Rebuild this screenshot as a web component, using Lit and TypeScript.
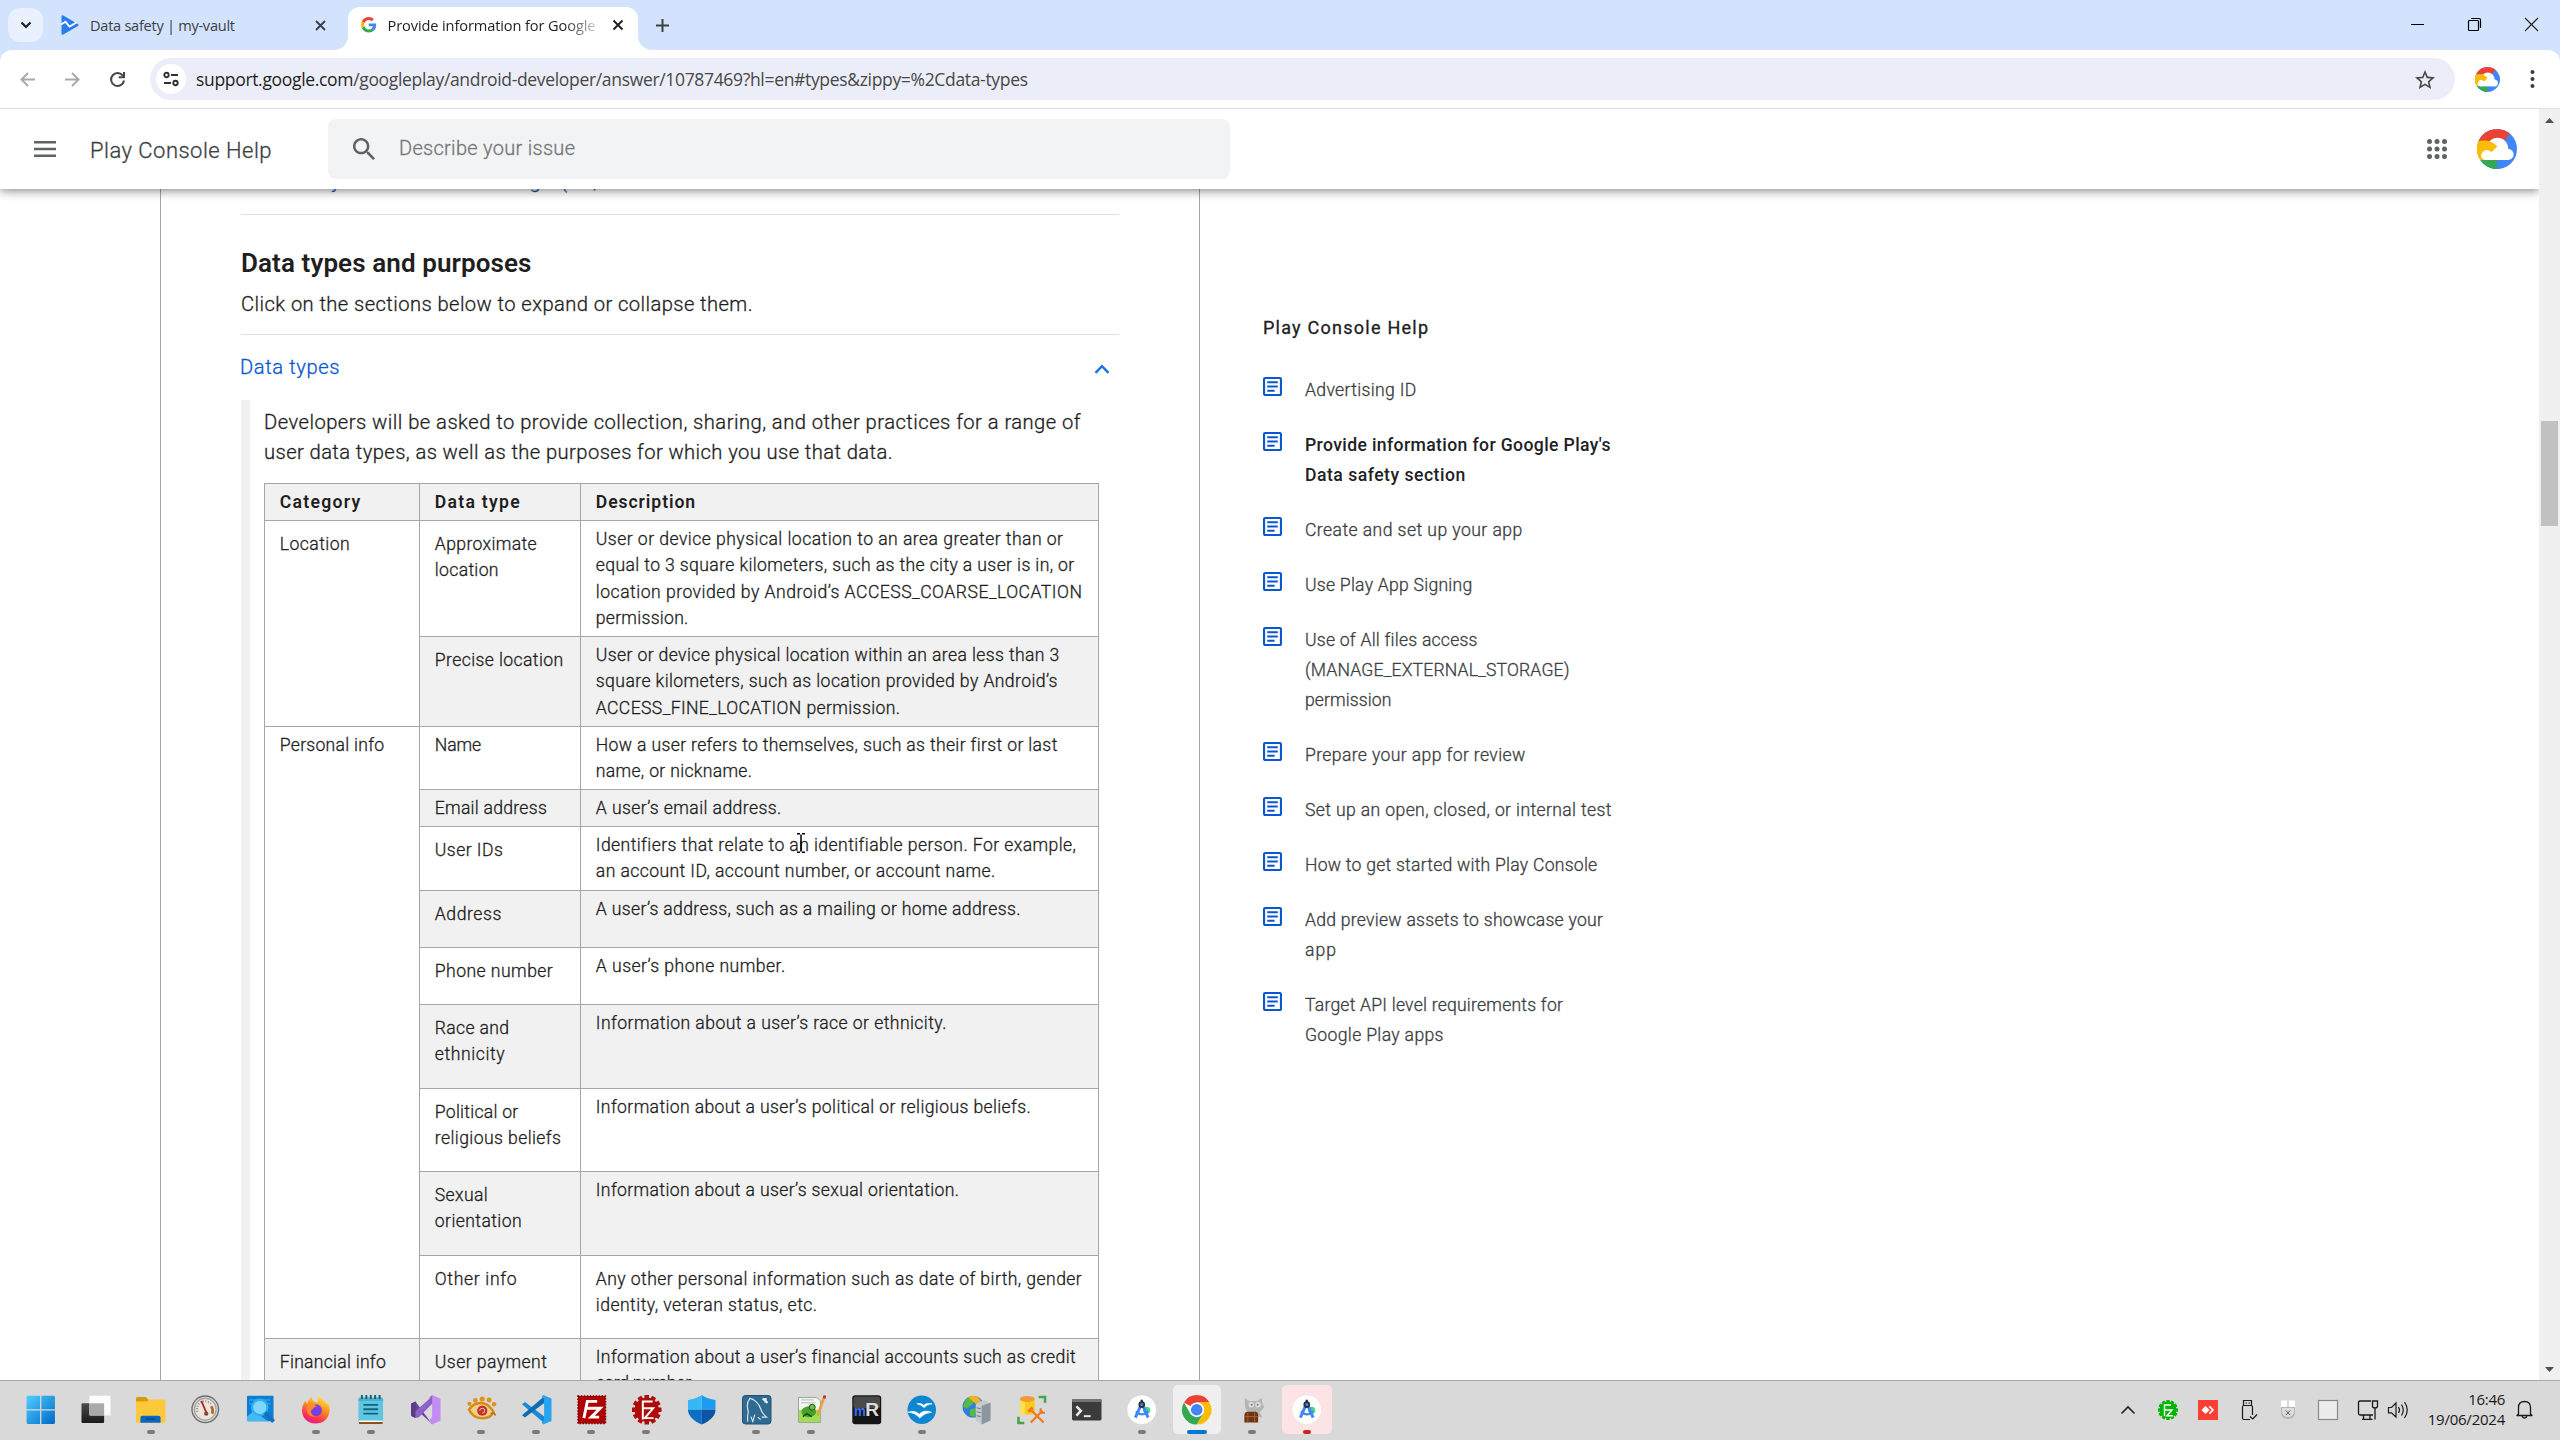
import { LitElement, html, css, svg, nothing } from "lit";
import { customElement, property } from "lit/decorators.js";

/* A single line of text whose tracking is adjusted to a given width. */
@customElement("fit-text")
class FitText extends LitElement {
  static styles = css`
    :host { display: inline-block; white-space: nowrap; }
  `;
  @property({ type: Number }) w = 0;
  firstUpdated() {
    const n = (this.textContent ?? "").trim().length;
    if (!this.w || n < 2) return;
    const natural = this.getBoundingClientRect().width;
    this.style.letterSpacing = `${((this.w - natural) / (n - 1)).toFixed(3)}px`;
  }
  render() { return html`<slot></slot>`; }
}

type Line = [string, number];
const lines = (ls: Line[]) => ls.map(([t, w]) => html`<div class="ln"><fit-text .w=${w + 1.2}>${t}</fit-text></div>`);

interface Row {
  cat?: { text: Line; span: number; grey?: boolean; low?: boolean };
  type: Line[]; desc: Line[]; grey?: boolean; typeLow?: boolean; descLow?: boolean;
}

const ROWS: Row[] = [
  { cat: { text: ["Location", 68.6], span: 2, low: true }, typeLow: true,
    type: [["Approximate", 100.7], ["location", 62.5]],
    desc: [["User or device physical location to an area greater than or", 466], ["equal to 3 square kilometers, such as the city a user is in, or", 477.3], ["location provided by Android’s ACCESS_COARSE_LOCATION", 484.9], ["permission.", 91.3]] },
  { grey: true, typeLow: true, type: [["Precise location", 127.2]],
    desc: [["User or device physical location within an area less than 3", 462.2], ["square kilometers, such as location provided by Android’s", 460.5], ["ACCESS_FINE_LOCATION permission.", 303]] },
  { cat: { text: ["Personal info", 103.1], span: 9 }, type: [["Name", 45]],
    desc: [["How a user refers to themselves, such as their first or last", 460], ["name, or nickname.", 155]] },
  { grey: true, type: [["Email address", 110.8]], desc: [["A user’s email address.", 184.3]] },
  { typeLow: true, type: [["User IDs", 66.9]],
    desc: [["Identifiers that relate to an identifiable person. For example,", 478.3], ["an account ID, account number, or account name.", 398.2]] },
  { grey: true, typeLow: true, type: [["Address", 65.3]], desc: [["A user’s address, such as a mailing or home address.", 423.4]] },
  { typeLow: true, type: [["Phone number", 116.8]], desc: [["A user’s phone number.", 188.1]] },
  { grey: true, typeLow: true, type: [["Race and", 73], ["ethnicity", 68.6]], desc: [["Information about a user’s race or ethnicity.", 349.4]] },
  { typeLow: true, type: [["Political or", 82.3], ["religious beliefs", 125]], desc: [["Information about a user’s political or religious beliefs.", 433.8]] },
  { grey: true, typeLow: true, type: [["Sexual", 51.6], ["orientation", 85.6]], desc: [["Information about a user’s sexual orientation.", 362]] },
  { typeLow: true, descLow: true, type: [["Other info", 80.6]],
    desc: [["Any other personal information such as date of birth, gender", 484.8], ["identity, veteran status, etc.", 220]] },
  { cat: { text: ["Financial info", 104.8], span: 1, grey: true, low: true }, grey: true, typeLow: true,
    type: [["User payment", 110.8]],
    desc: [["Information about a user’s financial accounts such as credit", 478.3], ["card number.", 97]] },
];

const NAV: { lines: Line[]; current?: boolean }[] = [
  { lines: [["Advertising ID", 110]] },
  { lines: [["Provide information for Google Play's", 304.3], ["Data safety section", 159]], current: true },
  { lines: [["Create and set up your app", 216]] },
  { lines: [["Use Play App Signing", 166]] },
  { lines: [["Use of All files access", 171], ["(MANAGE_EXTERNAL_STORAGE)", 263.3], ["permission", 85.3]] },
  { lines: [["Prepare your app for review", 219]] },
  { lines: [["Set up an open, closed, or internal test", 305.3]] },
  { lines: [["How to get started with Play Console", 291]] },
  { lines: [["Add preview assets to showcase your", 296.7], ["app", 29.7]] },
  { lines: [["Target API level requirements for", 256.7], ["Google Play apps", 137.3]] },
];

const cloudAvatar = (size: number, id: string) => html`
  <svg width=${size} height=${size} viewBox="0 0 40 40">
    <defs><clipPath id=${id}><circle cx="20" cy="20" r="20"/></clipPath></defs>
    <g clip-path="url(#${id})">
      <rect width="40" height="40" fill="#4285f4"/>
      <path d="M0 0H36L27 12H0z" fill="#ea4335"/>
      <rect y="12" width="14" height="19" fill="#fbbc04"/>
      <rect y="31" width="20" height="9" fill="#34a853"/>
      <circle cx="20.5" cy="19.5" r="10.7" fill="#fff"/>
      <circle cx="9" cy="25.7" r="5.3" fill="#fff"/>
      <circle cx="31" cy="25.4" r="5.6" fill="#fff"/>
      <rect x="9" y="20" width="22" height="11" fill="#fff"/>
      <path d="M0 12.5C7 10.5 15 11.5 20.3 17.5L14.5 23C11 19.3 4.5 20.5 4 27.5L0 29z" fill="#fbbc04"/>
    </g>
  </svg>`;

const gLogo = svg`
  <path fill="#EA4335" d="M24 9.5c3.54 0 6.71 1.22 9.21 3.6l6.85-6.85C35.9 2.38 30.47 0 24 0 14.62 0 6.51 5.38 2.56 13.22l7.98 6.19C12.43 13.72 17.74 9.5 24 9.5z"/>
  <path fill="#4285F4" d="M46.98 24.55c0-1.57-.15-3.09-.38-4.55H24v9.02h12.94c-.58 2.96-2.26 5.48-4.78 7.18l7.73 6c4.51-4.18 7.09-10.36 7.09-17.65z"/>
  <path fill="#FBBC05" d="M10.53 28.59c-.48-1.45-.76-2.99-.76-4.59s.27-3.14.76-4.59l-7.98-6.19C.92 16.46 0 20.12 0 24c0 3.88.92 7.54 2.56 10.78l7.97-6.19z"/>
  <path fill="#34A853" d="M24 48c6.48 0 11.93-2.13 15.89-5.81l-7.73-6c-2.15 1.45-4.92 2.3-8.16 2.3-6.26 0-11.57-4.22-13.47-9.91l-7.98 6.19C6.51 42.62 14.62 48 24 48z"/>`;

/* Teeth around a round or square badge */
const gear = (cx: number, cy: number, r: number, n: number, t: number) =>
  Array.from({ length: n }, (_, i) => svg`<rect x=${cx - t / 2} y=${cy - r} width=${t} height=${r * 2} transform=${`rotate(${(180 / n) * i} ${cx} ${cy})`}/>`);

const compass = svg`
  <circle cx="20" cy="15.500" r="3.600" fill="#3ddc84"/>
  <path d="M14 10.500L8.500 23M16 10.500L21.500 23" stroke="#4285f4" stroke-width="3" fill="none"/>
  <path d="M9 16.800C13 20.600 17.500 20.400 21.500 16.500" stroke="#4285f4" stroke-width="2.300" fill="none"/>
  <path d="M15 4.800V8" stroke="#263238" stroke-width="2.400"/>
  <circle cx="15" cy="9.700" r="2.500" fill="#4285f4" stroke="#263238" stroke-width="1.800"/>`;

interface Task { icon: unknown; run?: "grey" | "blue" | "red"; hi?: "light" | "pink"; }

const TASKS: Task[] = [
  { icon: svg`<defs><linearGradient id="wn" x1="0" y1="0" x2="1" y2="1"><stop offset="0" stop-color="#4fd0ff"/><stop offset="1" stop-color="#0067c8"/></linearGradient></defs>
    <path fill="url(#wn)" d="M2 .8H14.3V14.5H.6V2.2Q.6.8 2 .8zM15.6.8H28Q29.4.8 29.4 2.2V14.5H15.6zM.6 15.8H14.3V29.6H2Q.6 29.6.6 28.2zM15.6 15.8H29.4V28.2Q29.4 29.6 28 29.6H15.6z"/>` },
  { icon: svg`<defs><linearGradient id="tv" x1="0" y1="0" x2="0" y2="1"><stop offset="0" stop-color="#4a4a4a"/><stop offset="1" stop-color="#1a1a1a"/></linearGradient></defs>
    <rect x=".5" y="8.5" width="23" height="20" rx="1" fill="url(#tv)"/><rect x="8.5" y=".8" width="21.5" height="20" rx="1" fill="#fff" opacity=".92"/><rect x="8.5" y="8.5" width="15" height="12.3" fill="#aaa"/>` },
  { run: "grey", icon: svg`<path d="M0 3.5Q0 2 1.5 2H10L13 5H20V12H0z" fill="#dc9a0a"/><path d="M0 6.5H11L14 4.7H28.5Q30 4.7 30 6.2V27Q30 28.3 28.5 28.3H1.5Q0 28.3 0 27z" fill="#fdc93b"/><path d="M4.5 28.3V23Q4.5 21 6.5 21H23Q25 21 25 23V28.3z" fill="#0b66bd"/><path d="M10 24.4H19.5" stroke="#063f80" stroke-width="1.2"/>` },
  { icon: svg`<circle cx="14.5" cy="14.5" r="13.5" fill="#d6d6d3" stroke="#6b7073" stroke-width="1.4"/><circle cx="14.5" cy="14.5" r="11" fill="#ebe5da" stroke="#a5a29c" stroke-width="1.2"/><path d="M6.500 17A8 8 0 0 1 20 9" stroke="#8d8d86" stroke-width="2" stroke-dasharray="1 1.6" fill="none"/><path d="M20.5 11.500A8 8 0 0 1 21.500 19" stroke="#a8692e" stroke-width="2.600" fill="none"/><path d="M10.500 6L16.500 20" stroke="#b3202a" stroke-width="1.800"/><circle cx="15.500" cy="19" r="2.200" fill="#7c4b43"/>` },
  { icon: svg`<rect x="1" y=".8" width="27" height="26" rx="1" fill="#0c7fd4"/><path d="M3 5H25M3 9H25" stroke="#3fb0ef" stroke-width="2" opacity=".5"/><path d="M1 26.800V22L8 16 22 26.800z" fill="#4cc0f6" opacity=".9"/><circle cx="14" cy="12.5" r="7.800" fill="#7fd8fb" stroke="#2bb0f2" stroke-width="2.2"/><path d="M19.5 18L28 27" stroke="#1270bd" stroke-width="4"/>` },
  { run: "grey", icon: svg`<defs><linearGradient id="ff" x1=".75" y1="0" x2=".3" y2="1"><stop offset="0" stop-color="#fff14f"/><stop offset=".4" stop-color="#ff9a1e"/><stop offset=".75" stop-color="#ff3b4b"/><stop offset="1" stop-color="#e5148b"/></linearGradient></defs>
    <path d="M15 29C6.500 29 1 23 1 15.500 1 11 3 8 5 5.500 5.200 7 5.500 8 6.500 9 7 6 8.500 3.500 11 2 10.800 5 13 6.500 16 7.500 18 5 17 2.500 19 0 20 4 24 6 26.500 9 27.500 9.500 27.300 8 27.300 7.500 29 10.500 29.500 13.500 29 17 28 24 22.500 29 15 29z" fill="url(#ff)"/><circle cx="15.200" cy="15.500" r="6" fill="#7a3fe0"/><path d="M6 12C9 8.500 14 9 16 11.500 13 12 13 14.500 10.500 15 9.500 18 11 21 15 22 8.500 23 5 18 6 12z" fill="#ff8a2a"/>` },
  { run: "grey", icon: svg`<rect x="2.500" y="3" width="25" height="25.500" rx="1.500" fill="#5fc6e2"/><path d="M2.500 4.500Q2.500 2.500 4.500 2.500H25.500Q27.500 2.500 27.500 4.500V6H2.500z" fill="#45b4d2"/><path d="M6 0V4M10.500 0V4M15 0V4M19.500 0V4M24 0V4" stroke="#155f78" stroke-width="2"/><path d="M7.500 10H22.500M7.500 14.500H22.500M7.500 19H22.500" stroke="#0f6580" stroke-width="1.900"/><rect x="3" y="26" width="24" height="1.500" fill="#fff"/><rect x="3" y="27.500" width="24" height="2" fill="#954c14"/>` },
  { icon: svg`<path d="M0 9L4.500 6.500 21 29 8 17 4 23 0 21z" fill="#6a4299"/><path d="M0 21L4.500 23.500 22 1 9 12.500z" fill="#8d62c4"/><path d="M0 9L4.500 6.500V23.500L0 21z" fill="#5b3b86"/><path d="M21.500 0L30 3.800V26.200L21.500 30 18 27 21.500 22V8L18 3z" fill="#c48cf2"/><path d="M4 23.500L17 7 21.500 0V9L8 22.500z" fill="#8b5ecb"/>` },
  { run: "grey", icon: svg`<path d="M2 15C6 9 12 7.500 17 8.500 22 9.500 24 13 27 17 25 22 20 24 14 23.500 8 23 4 19 2 15z" fill="#ecd08e" stroke="#d98a12" stroke-width="2.500"/><circle cx="15.500" cy="16" r="5.200" fill="#c6322a"/><path d="M13 16a2.500 2.500 0 1 1 2.500 2.500" stroke="#f3c9b0" stroke-width="1" fill="none"/><circle cx="2.500" cy="9" r="2.100" fill="#e09417"/><circle cx="8.500" cy="5.500" r="2.400" fill="#e09417"/><circle cx="15.500" cy="4" r="2.600" fill="#e09417"/><circle cx="22.500" cy="5" r="2.500" fill="#e09417"/><circle cx="27.500" cy="9.500" r="2.300" fill="#e09417"/><path d="M24 19Q28 17 29 21" stroke="#b06b2d" stroke-width="1.500" fill="none"/>` },
  { run: "grey", icon: svg`<path d="M0 9.500L3 7 23 22V29z" fill="#1a8ad4"/><path d="M0 20.500L3 23 23 8V1z" fill="#0c6db5"/><path d="M21.500 0L30 3.500V26.500L21.500 30 20 28 22.500 26V4L20 2z" fill="#27a3f0"/>` },
  { run: "grey", icon: svg`<rect x="1" y="1" width="28" height="28" fill="#b10000" stroke="#7a0000" stroke-width="1.600" stroke-dasharray="1.500 1.500"/><path d="M7 23.500L10.500 6.500H20.500M9 13.500H17M14.500 13.500H23.500L14.500 22.500H22.500" stroke="#fff" stroke-width="3" fill="none"/>` },
  { run: "grey", icon: svg`<g fill="#b00b0b">${gear(15, 15, 15, 6, 4.600)}<circle cx="15" cy="15" r="12.400"/></g><path d="M11 25V6.500H21M11 13.500H21.500L13 23.500H22" stroke="#fff" stroke-width="2" fill="none"/>` },
  { icon: svg`<path d="M15 0C18.500 2.500 24 4.500 29 5V15H15z" fill="#1d9bee"/><path d="M15 0C11.500 2.500 6 4.500 1 5V15H15z" fill="#35b8f5"/><path d="M1 15H15V30C7 26.500 1 21.500 1 15z" fill="#0d6fc4"/><path d="M29 15H15V30C23 26.500 29 21.500 29 15z" fill="#0b55a4"/>` },
  { run: "grey", icon: svg`<rect x=".5" y=".5" width="29" height="29" rx="3" fill="#2f6a91" stroke="#244f6e"/><path d="M6 27C5 22 6 20 6.500 17 4.500 11 6 6 8 3.500 12 4 17 8 19 14 20 18 22 20 25 22.500L20 22.500M19 25L16 22.500M9 22L11 27 13 20" stroke="#d6e6ef" stroke-width="1.200" fill="none"/><path d="M21 3.500L26 8M24 3V8" stroke="#e8eff3" stroke-width="2.200"/>` },
  { run: "grey", icon: svg`<path d="M1.500 2.500H20L24 6V28H1.500z" fill="#f3f5f0" stroke="#9aa19a"/><path d="M2 15H23.500V27.500H2z" fill="#9fdd55"/><path d="M4 5H17M4 8H19" stroke="#b7bdb7"/><ellipse cx="12" cy="17" rx="7.500" ry="5.500" fill="#49a32b"/><circle cx="15.500" cy="12.500" r="3" fill="#6cc63b" stroke="#234d17"/><path d="M6 22L10 19 15 22" stroke="#1d4513" stroke-width="1.500" fill="none"/><path d="M28 1L21 21" stroke="#e8a23b" stroke-width="2.600"/><path d="M28.500 .5L27.500 3.500" stroke="#c13b2d" stroke-width="2.800"/>` },
  { icon: svg`<rect x=".3" y=".3" width="29.400" height="29.400" rx="3" fill="#151515"/><rect x="1.500" y="1.500" width="27" height="12" rx="2" fill="#4a4a4a"/><text x="2" y="21" font-family="Liberation Sans" font-weight="700" font-size="14" fill="#3c6ff0" textLength="12" lengthAdjust="spacingAndGlyphs">m</text><text x="13.500" y="21" font-family="Liberation Sans" font-weight="700" font-size="19" fill="#dcdcdc" textLength="14" lengthAdjust="spacingAndGlyphs">R</text>` },
  { run: "grey", icon: svg`<circle cx="15" cy="15" r="14.500" fill="#0f86d1"/><path d="M10 9Q14 7.500 17 10.500 20 7.500 25.500 9 20 9.500 17.500 13 14 9.500 10 9z" fill="#fff" stroke="#fff" stroke-width=".6"/><path d="M1 17.500Q8 15 12.500 19.500 17 14.500 25 17.500 18 18 13 23.500 8.500 18 1 17.500z" fill="#fff" stroke="#fff" stroke-width=".6"/>` },
  { icon: svg`<circle cx="11.500" cy="12" r="11" fill="#2f7fd6"/><path d="M3 6Q8 0 14 2L11 9 5 14 1 12zM8 15L15 13 13 22 8 21z" fill="#57b947"/><path d="M6 2Q15-2 20 7L14 9z" fill="#f2b321"/><path d="M14 9L23 5 29 8V26L20 30 14 26z" fill="#c4ccd2"/><path d="M20 11L29 8V26L20 30z" fill="#8b969e"/><path d="M15 13L19 14M15 17L19 18M15 21L19 22" stroke="#6b757c"/>` },
  { icon: svg`<path d="M3 4V18C3 20.500 18 20.500 18 18V4z" fill="#fbcb1c"/><path d="M3 4V18C3 19 5.500 20 8 20V5z" fill="#ffdf57"/><ellipse cx="10.500" cy="4" rx="7.500" ry="3" fill="#f19a38"/><path d="M22 2H28.500V8M1.500 22V28.500H7.500" stroke="#48a44b" stroke-width="2.600" fill="none"/><path d="M14 15L27 28M26 16L14 28" stroke="#ef7a1a" stroke-width="2.200"/><path d="M11.500 17L16 13" stroke="#ef7a1a" stroke-width="3.200"/><path d="M24 13.500V18H28.500" stroke="#ef7a1a" stroke-width="2" fill="none"/>` },
  { icon: svg`<rect x="0" y="4" width="30" height="22" rx="1.500" fill="#3b3b3b"/><rect x="0" y="4" width="30" height="3" rx="1" fill="#757575"/><path d="M4.500 11.500L9 16 4.500 21" stroke="#e8e8e8" stroke-width="2.600" fill="none"/><path d="M12 21.500H19" stroke="#e8e8e8" stroke-width="2"/>` },
  { run: "grey", icon: svg`<g fill="#fff">${gear(15, 15, 14.600, 8, 5)}<circle cx="15" cy="15" r="13.800"/></g>${compass}` },
  { run: "blue", hi: "light", icon: svg`<circle cx="15" cy="15" r="15" fill="#fff"/><path d="M15 15L2 7.500A15 15 0 0 1 28 7.500H15z" fill="#ea4335"/><path d="M28 7.500A15 15 0 0 1 15 30L21.500 18.700 21.500 11.300 15 7.500z" fill="#fbbc05"/><path d="M2 7.500L8.500 18.700 15 22.500 21.500 18.700 15 30A15 15 0 0 1 2 7.500z" fill="#34a853"/><circle cx="15" cy="15" r="7.500" fill="#fff"/><circle cx="15" cy="15" r="5.900" fill="#4285f4"/>` },
  { run: "grey", icon: svg`<path d="M8 3L12 6H21L25 3 26 10 28 12 23 18 26 23 19 22 12 20 8 12z" fill="#b4b4b2"/><circle cx="14.500" cy="10" r="2.800" fill="#dedede"/><circle cx="21.500" cy="10" r="2.800" fill="#dedede"/><circle cx="15" cy="10" r="1" fill="#777"/><circle cx="21" cy="10" r="1" fill="#777"/><path d="M7.500 20Q8 17 11 17H19Q21 17 21.500 20V28H7.500z" fill="#6f3413"/><path d="M7.500 22H21.500M11 18V28M18 18V28" stroke="#a8652a" stroke-width="1"/>` },
  { run: "red", hi: "pink", icon: svg`<circle cx="15" cy="15" r="14.500" fill="#fff"/>${compass}` },
];

@customElement("app-root")
class AppRoot extends LitElement {
  static styles = css`
    :host { display: block; width: 2560px; height: 1440px; overflow: hidden; background: #fff; color: #1f1f1f; font-family: Roboto, "Liberation Sans", sans-serif; }
    * { box-sizing: border-box; }
    svg { display: block; flex: none; overflow: visible; }
    .screen { display: flex; flex-direction: column; width: 2560px; height: 1440px; overflow: hidden; position: relative; }
    .seg { font-family: "Open Sans", "Noto Sans", sans-serif; }

    .tabs { display: flex; height: 50px; background: #d3e3fd; flex: none; padding-left: 8px; }
    .tabmenu { width: 35px; height: 34px; margin-top: 8px; border-radius: 12px; background: #e9f1fe; display: grid; place-items: center; }
    .tab { display: flex; height: 50px; align-items: center; font-size: 14.6px; color: #3c4043; }
    .tab1 { margin-left: 18px; width: 287px; }
    .title1 { margin-left: 11px; width: 225px; }
    .tab2 { width: 290px; height: 43px; margin-top: 7px; padding-left: 13px; padding-bottom: 7px; background: #fff; border-radius: 12px 12px 0 0; position: relative; color: #1f1f1f; }
    .tab2::before, .tab2::after { content: ""; position: absolute; bottom: 0; width: 14px; height: 14px; }
    .tab2::before { left: -14px; background: radial-gradient(circle at 0 0, #d3e3fd 13.500px, #fff 14.500px); }
    .tab2::after { right: -14px; background: radial-gradient(circle at 100% 0, #d3e3fd 13.500px, #fff 14.500px); }
    .title2 { width: 209px; margin: 0 16px 0 11px; overflow: hidden; -webkit-mask-image: linear-gradient(90deg, #000 175px, transparent 218px); }
    .plus { margin: 19px 0 0 18px; }
    .win { margin-left: auto; display: flex; gap: 44px; padding: 18px 22px 0 0; }

    .toolbarwrap { background: #d3e3fd; flex: none; }
    .toolbar { height: 59px; background: #fff; border-radius: 12px 12px 0 0; border-bottom: 1px solid #dfdfdf; display: flex; align-items: center; padding: 0 0 0 20px; }
    .nav { display: flex; gap: 30px; width: 130px; }
    .omni { width: 2305px; height: 42px; border-radius: 21px; background: #ebeef8; display: flex; align-items: center; padding: 0 20px 0 6px; font-size: 17.500px; color: #474747; }
    .site { width: 30px; height: 30px; border-radius: 50%; background: #fff; display: grid; place-items: center; margin-right: 10px; }
    .dom { color: #1f1f1f; }
    .omni .star { margin-left: auto; }
    .tbav { margin-left: 20px; }
    .kebab { margin-left: 30px; }

    .page { flex: 1; display: flex; min-height: 0; }
    .view { width: 2539px; display: flex; flex-direction: column; overflow: hidden; }
    .head { height: 80px; flex: none; background: #fff; display: flex; align-items: center; padding-left: 34px; position: relative; z-index: 1; box-shadow: 0 1px 10px rgba(0,0,0,.55); clip-path: inset(0 0 -12px 0); font-weight: 300; -webkit-text-stroke: .3px currentColor; }
    .brand { font-size: 22px; color: #3c4043; margin: 3px 0 0 34px; width: 238px; line-height: 30px; }
    .search { width: 902px; height: 60px; border-radius: 8px; background: #f1f3f4; display: flex; align-items: center; padding-left: 25px; font-size: 20px; color: #757779; }
    .search fit-text { margin: -2px 0 0 24px; }
    .apps { margin-left: auto; margin-right: 30px; }
    .hav { margin-right: 22px; }
    .body { flex: 1; min-height: 0; display: flex; padding-left: 160px; overflow: hidden; font-weight: 300; -webkit-text-stroke: .3px currentColor; }
    .article { width: 1040px; border: solid #a6a6a6; border-width: 0 1px; padding-left: 80px; flex: none; }
    .peek { height: 25px; width: 878px; font-size: 20px; line-height: 24px; color: #1c4fae; display: flex; }
    .peek span { margin-top: -20px; }
    .p1 { margin-left: 90px; } .p2 { margin-left: 189px; } .p3 { margin-left: 20px; } .p4 { margin-left: 26px; }
    .rule { width: 878px; height: 1px; background: #e0e0e0; }
    .h { font-size: 26px; font-weight: 600; line-height: 34px; height: 34px; margin-top: 31px; -webkit-text-stroke: 0; }
    .t20 { font-size: 20.200px; line-height: 30px; }
    .click { margin: 9px 0 15px 0; }
    .zip { display: flex; height: 30px; margin: 17px 0 18px -1px; width: 870px; justify-content: space-between; color: #0b57d0; }
    .zip svg { margin-top: 12px; }
    .panel { border-left: 9px solid #f1f1f1; padding: 7px 0 0 14px; height: 1000px; }
    .table { width: 835px; margin-top: 16px; display: grid; grid-template-columns: 155px 161px 518px; grid-template-rows: 37px 116px 90px 63px 37px 64px 57px 57px 84px 83px 84px 83px 90px; font-size: 17.600px; line-height: 26.250px; border-right: 1px solid #a6a6a6; }
    .cell { border: solid #a6a6a6; border-width: 1px 0 0 1px; padding: 5px 0 0 14.800px; min-width: 0; background: #fff; }
    .cell.grey { background: #f1f1f1; }
    .low { padding-top: 10px; }
    .cell.th { font-weight: 600; background: #f1f1f1; -webkit-text-stroke: 0; }
    .ln { white-space: nowrap; }
    .side { padding: 124px 0 0 62px; font-size: 17.600px; line-height: 30px; color: #3c4043; }
    .sh { color: #202124; font-size: 18px; height: 30px; margin: 0 0 32px 1px; font-weight: 400; }
    .it { display: flex; margin-bottom: 25px; }
    .it svg { margin: 2px 23px 0 1px; }
    .cur { color: #202124; font-weight: 500; -webkit-text-stroke: 0; }

    .scroll { width: 21px; background: #f0f0f0; display: flex; flex-direction: column; align-items: center; padding: 9px 0 8px; }
    .thumb { width: 17px; height: 105px; background: #c1c1c1; margin: 298px 0 auto; }

    .task { height: 60px; flex: none; border-top: 1px solid #a9a9a9; background: #d9d9d9; display: flex; padding-left: 13.500px; }
    .tk { width: 55.040px; display: flex; flex-direction: column; align-items: center; padding-top: 4px; }
    .box { width: 48px; height: 49px; border-radius: 5px; display: flex; flex-direction: column; align-items: center; padding-top: 10px; gap: 5px; }
    .light { background: #efefef; } .pink { background: #fce4e6; width: 50px; }
    .dot { width: 8px; height: 4px; border-radius: 2px; background: #7a7a7a; }
    .dot.blue { width: 20px; background: #0078d4; } .dot.red { background: #c42b1c; }
    .tray { margin-left: auto; display: flex; align-items: flex-start; padding: 19px 27px 0 0; }
    .tray .sys { width: 288px; }
    .clock { font-size: 15px; line-height: 20px; color: #1a1a1a; text-align: right; margin: -11px 11px 0 19px; width: 78px; display: flex; flex-direction: column; align-items: flex-end; }
    .ibeam { position: absolute; left: 797px; top: 833px; }
  `;

  render() {
    return html`<div class="screen">
      <div class="tabs seg">
        <div class="tabmenu"><svg width="12" height="8" viewBox="0 0 12 8"><path d="M1.500 1.500L6 6 10.500 1.500" stroke="#1f1f1f" stroke-width="2.200" fill="none"/></svg></div>
        <div class="tab tab1">
          <svg width="18" height="20" viewBox="0 0 18 20"><path d="M.5 1.500Q.5-.3 2.300.6L17 9Q18.400 10 17 11L2.300 19.500Q.5 20.300.5 18.500z" fill="#2b7de9"/><path d="M0 9.500L4.500 6.800 8.500 11.500 15.500 7.500" stroke="#fff" stroke-width="1.900" fill="none"/></svg>
          <div class="title1"><fit-text .w=${145}>Data safety | my-vault</fit-text></div>
          <svg width="11" height="11" viewBox="0 0 11 11"><path d="M1 1L10 10M10 1L1 10" stroke="#3c4043" stroke-width="1.900"/></svg>
        </div>
        <div class="tab tab2">
          <svg width="15.500" height="15.500" viewBox="0 0 48 48">${gLogo}</svg>
          <div class="title2"><fit-text .w=${208}>Provide information for Google</fit-text></div>
          <svg width="10" height="10" viewBox="0 0 10 10"><path d="M.5.5L9.500 9.500M9.500.5L.5 9.500" stroke="#1f1f1f" stroke-width="1.900"/></svg>
        </div>
        <svg class="plus" width="13" height="13" viewBox="0 0 13 13"><path d="M6.500 0V13M0 6.500H13" stroke="#3c4043" stroke-width="2"/></svg>
        <div class="win">
          <svg width="13" height="13" viewBox="0 0 13 13"><path d="M0 6.500H13" stroke="#000"/></svg>
          <svg width="13" height="13" viewBox="0 0 13 13"><rect x=".5" y="2.500" width="10" height="10" rx="1" fill="none" stroke="#000" stroke-width="1.200"/><path d="M3 .5H11Q12.500.5 12.500 2V10" fill="none" stroke="#000" stroke-width="1.200"/></svg>
          <svg width="13" height="13" viewBox="0 0 13 13"><path d="M0 0L13 13M13 0L0 13" stroke="#222" stroke-width="1.200"/></svg>
        </div>
      </div>
      <div class="toolbarwrap"><div class="toolbar">
        <div class="nav">
          <svg width="15" height="15" viewBox="0 0 15 15"><path d="M15 7.500H1.500M8 1L1.500 7.500 8 14" stroke="#a9a9a9" stroke-width="1.900" fill="none"/></svg>
          <svg width="15" height="15" viewBox="0 0 15 15"><path d="M0 7.500H13.500M7 1L13.500 7.500 7 14" stroke="#a9a9a9" stroke-width="1.900" fill="none"/></svg>
          <svg width="15" height="15" viewBox="0 0 15 15"><path d="M13 3.900A6.500 6.500 0 1 0 14 8.500" stroke="#474747" stroke-width="2" fill="none"/><path d="M14 0V5.300H8.700" stroke="#474747" stroke-width="2" fill="none"/></svg>
        </div>
        <div class="omni seg">
          <div class="site"><svg width="16" height="14" viewBox="0 0 16 14"><circle cx="3.500" cy="3" r="2.200" fill="none" stroke="#303030" stroke-width="1.900"/><path d="M8 3H15M1 11H8" stroke="#303030" stroke-width="2"/><circle cx="12.500" cy="11" r="2.200" fill="none" stroke="#303030" stroke-width="1.900"/></svg></div>
          <fit-text .w=${832}><span class="dom">support.google.com</span>/googleplay/android-developer/answer/10787469?hl=en#types&amp;zippy=%2Cdata-types</fit-text>
          <svg class="star" width="20" height="19" viewBox="2 2 20 19"><path fill="#474747" d="M22 9.240l-7.190-.62L12 2 9.190 8.630 2 9.240l5.460 4.730L5.820 21 12 17.270 18.180 21l-1.630-7.030L22 9.240zM12 15.400l-3.760 2.270 1-4.280-3.320-2.880 4.380-.38L12 6.100l1.710 4.040 4.380.38-3.320 2.880 1 4.280L12 15.400z"/></svg>
        </div>
        <div class="tbav">${cloudAvatar(25, "ca")}</div>
        <svg class="kebab" width="5" height="18" viewBox="0 0 5 18"><g fill="#3c3c3c"><circle cx="2.500" cy="2" r="2"/><circle cx="2.500" cy="9" r="2"/><circle cx="2.500" cy="16" r="2"/></g></svg>
      </div></div>

      <div class="page">
        <div class="view">
          <div class="head">
            <svg width="22" height="16" viewBox="0 0 22 16"><path d="M0 1.200H22M0 8H22M0 14.800H22" stroke="#5f6368" stroke-width="2.400"/></svg>
            <div class="brand"><fit-text .w=${181.5}>Play Console Help</fit-text></div>
            <div class="search">
              <svg width="22" height="22" viewBox="3 3 17.490 17.490"><path fill="#5f6368" d="M15.500 14h-.79l-.28-.27C15.410 12.590 16 11.110 16 9.500 16 5.910 13.090 3 9.500 3S3 5.910 3 9.500 5.910 16 9.500 16c1.610 0 3.090-.59 4.230-1.570l.27.28v.79l5 4.990L20.490 19l-4.990-5zm-6 0C7.010 14 5 11.990 5 9.500S7.010 5 9.500 5 14 7.010 14 9.500 11.990 14 9.500 14z"/></svg>
              <fit-text .w=${176}>Describe your issue</fit-text>
            </div>
            <svg class="apps" width="20" height="20" viewBox="0 0 20 20"><g fill="#5f6368">${[2.5, 10, 17.5].map(y => [2.5, 10, 17.5].map(x => svg`<circle cx=${x} cy=${y} r="2.500"/>`))}</g></svg>
            <div class="hav">${cloudAvatar(40, "cb")}</div>
          </div>
          <div class="body">
            <div class="article">
              <div class="peek"><span class="p1">y</span><span class="p2">g</span><span class="p3">(</span><span class="p4">,</span></div>
              <div class="rule"></div>
              <div class="h"><fit-text .w=${290.5}>Data types and purposes</fit-text></div>
              <div class="t20 click"><fit-text .w=${511.5}>Click on the sections below to expand or collapse them.</fit-text></div>
              <div class="rule"></div>
              <div class="t20 zip"><fit-text .w=${99.5}>Data types</fit-text>
                <svg width="16" height="10" viewBox="0 0 16 10"><path d="M1.500 8.800L8 2.200 14.500 8.800" stroke="#1a73e8" stroke-width="2.500" fill="none"/></svg></div>
              <div class="panel">
                <div class="t20">
                  <div class="ln"><fit-text .w=${816.5}>Developers will be asked to provide collection, sharing, and other practices for a range of</fit-text></div>
                  <div class="ln"><fit-text .w=${628.5}>user data types, as well as the purposes for which you use that data.</fit-text></div>
                </div>
                <div class="table">
                  <div class="cell th">${lines([["Category", 79.3]])}</div>
                  <div class="cell th">${lines([["Data type", 83.6]])}</div>
                  <div class="cell th">${lines([["Description", 98.2]])}</div>
                  ${ROWS.map(r => html`
                    ${r.cat ? html`<div class="cell ${r.cat.grey ? "grey" : ""} ${r.cat.low ? "low" : ""}" style="grid-row: span ${r.cat.span}">${lines([r.cat.text])}</div>` : nothing}
                    <div class="cell ${r.grey ? "grey" : ""} ${r.typeLow ? "low" : ""}">${lines(r.type)}</div>
                    <div class="cell ${r.grey ? "grey" : ""} ${r.descLow ? "low" : ""}">${lines(r.desc)}</div>`)}
                </div>
              </div>
            </div>
            <div class="side">
              <div class="sh"><fit-text .w=${165}>Play Console Help</fit-text></div>
              ${NAV.map(n => html`<div class="it ${n.current ? "cur" : ""}">
                <svg width="19" height="19" viewBox="3 3 18 18"><path fill="#0b57d0" d="M19 5v14H5V5h14m0-2H5c-1.100 0-2 .9-2 2v14c0 1.100.9 2 2 2h14c1.100 0 2-.9 2-2V5c0-1.100-.9-2-2-2zm-5 14H7v-2h7v2zm3-4H7v-2h10v2zm0-4H7V7h10v2z"/></svg>
                <div>${lines(n.lines)}</div></div>`)}
            </div>
          </div>
        </div>
        <div class="scroll">
          <svg width="9" height="5" viewBox="0 0 9 5"><path d="M0 5L4.500 0 9 5z" fill="#505050"/></svg>
          <div class="thumb"></div>
          <svg width="9" height="5" viewBox="0 0 9 5"><path d="M0 0L4.500 5 9 0z" fill="#505050"/></svg>
        </div>
      </div>

      <div class="task">
        ${TASKS.map(t => html`<div class="tk"><div class="box ${t.hi ?? ""}">
          <svg width="29.500" height="29.500" viewBox="0 0 30 30">${t.icon}</svg>
          ${t.run ? html`<div class="dot ${t.run}"></div>` : nothing}</div></div>`)}
        <div class="tray">
          <svg class="sys" width="288" height="22" viewBox="2120 1400 288 22">
            <path d="M2121.500 1413.500L2128 1407 2134.500 1413.500" stroke="#222" stroke-width="1.600" fill="none"/>
            <g fill="#00b400">${gear(2168, 1410, 10, 6, 3.4)}<circle cx="2168" cy="1410" r="8.300"/></g>
            <path d="M2164.500 1416V1405H2171M2164.500 1410H2172L2167 1415.800H2173" stroke="#fff" stroke-width="1.500" fill="none"/>
            <rect x="2198" y="1400" width="20" height="20" fill="#fb3f35"/>
            <path d="M2205.500 1406L2209.500 1410 2205.500 1414 2201.500 1410z" fill="#fff"/><path d="M2209.300 1406.300L2213 1410 2209.300 1413.700" stroke="#fff" stroke-width="1.700" fill="none"/>
            <path d="M2243.500 1405.500V1400.500H2251.500V1405.500M2252.500 1415V1407Q2252.500 1405.500 2251 1405.500H2244Q2242.500 1405.500 2242.500 1407V1418Q2242.500 1419.500 2244 1419.500H2250M2245.500 1403H2247M2248.500 1403H2250M2250 1416.500L2252.800 1419 2257 1414.500" stroke="#1a1a1a" stroke-width="1.200" fill="none"/>
            <path d="M2281 1401H2295V1412Q2295 1419 2288 1419T2281 1412z" fill="#b5b5b5"/><path d="M2281 1400.500H2287.500V1407H2281zM2288.500 1400.500H2295V1407H2288.500z" fill="#fff"/><path d="M2282 1408H2294V1412Q2293 1417 2288 1417T2282 1412z" fill="#dcdcdc"/><path d="M2285.800 1410.500L2290.200 1415M2290.200 1410.500L2285.800 1415" stroke="#555" stroke-width="1"/>
            <rect x="2318.500" y="1400.500" width="19" height="19" fill="#ececec" stroke="#8a8a8a" stroke-width="1.200"/>
            <path d="M2371 1401H2360Q2358.500 1401 2358.500 1402.500V1413.500Q2358.500 1415 2360 1415H2373M2363.500 1415V1419M2370 1415V1419M2362 1419.300H2372.500M2372.500 1401H2377.500V1406Q2377.500 1408 2375 1408T2372.500 1406zM2375 1408V1419.500" stroke="#1a1a1a" stroke-width="1.300" fill="none"/>
            <path d="M2388.500 1407.500H2391.500L2396 1403V1417L2391.500 1412.800H2388.500zM2398.500 1407Q2400.500 1410 2398.500 1413M2401.500 1404.500Q2405 1410 2401.500 1415.500M2404.500 1402Q2410 1410 2404.500 1418" stroke="#1a1a1a" stroke-width="1.200" fill="none"/>
          </svg>
          <div class="clock seg"><fit-text .w=${37}>16:46</fit-text><fit-text .w=${77.5}>19/06/2024</fit-text></div>
          <svg width="17" height="19" viewBox="0 0 17 19"><path d="M2.500 14V7.500Q2.500 1.500 8.500 1.500T14.500 7.500V14L16 15.500H1zM6 15.800Q6.500 18 8.500 18T11 15.800" stroke="#1a1a1a" stroke-width="1.300" fill="none" stroke-linejoin="round"/></svg>
        </div>
      </div>
      <svg class="ibeam" width="8" height="20" viewBox="0 0 8 20"><path d="M0 .7H3M5 .7H8M4 1.500V18.500M0 19.300H3M5 19.300H8" stroke="#000" stroke-width="1.500"/></svg>
    </div>`;
  }
}
